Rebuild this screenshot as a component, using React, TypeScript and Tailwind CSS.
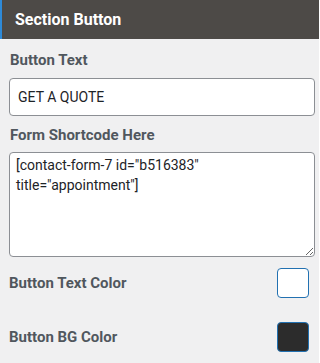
import React from "react";

const font = { fontFamily: "Roboto, 'Liberation Sans', sans-serif" };

function ColorRow({ label, color }: { label: string; color: string }) {
  return (
    <div className="flex items-center justify-between h-[30px] pr-[6px]">
      <span className="text-[15px] font-bold text-[#50575e]">{label}</span>
      <div
        className={`w-[32px] h-[30px] rounded-[4px] border border-[#2271b1] ${color}`}
      />
    </div>
  );
}

export default function App() {
  return (
    <div className="w-[319px] h-[363px] bg-[#f0f0f1] overflow-hidden" style={font}>
      <div className="h-[39px] bg-[#4d4a47] border-l-2 border-[#2e8ad8] flex items-center pl-[13px]">
        <span className="text-white font-bold text-[16px]">Section Button</span>
      </div>

      <div className="pl-[9px] pr-[4px]">
        <div className="pt-[11px] pb-[8px] pl-px text-[15px] font-bold text-[#50575e] leading-[20px]">
          Button Text
        </div>
        <input
          readOnly
          value="GET A QUOTE"
          className="w-full h-[38px] rounded-[4px] border border-[#8c8f94] bg-white px-[8px] text-[14px] text-[#1d2327] outline-none"
          style={font}
        />

        <div className="pt-[9px] pb-[7px] pl-px text-[15px] font-bold text-[#50575e] leading-[20px]">
          Form Shortcode Here
        </div>
        <textarea
          readOnly
          value={'[contact-form-7 id="b516383" title="appointment"]'}
          className="block w-full h-[105px] rounded-[4px] border border-[#8c8f94] bg-white px-[6px] py-[2px] text-[14px] leading-[20px] text-[#1d2327] outline-none"
          style={font}
        />

        <div className="pt-[11px] flex flex-col gap-[24px]">
          <ColorRow label="Button Text Color" color="bg-white" />
          <ColorRow label="Button BG Color" color="bg-[#2c2c2c]" />
        </div>
      </div>
    </div>
  );
}
